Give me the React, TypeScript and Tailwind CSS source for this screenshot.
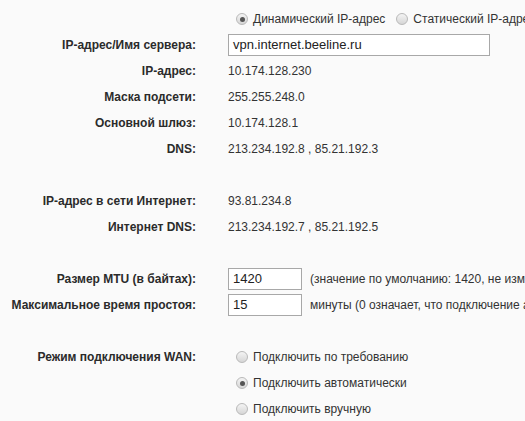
import React from 'react'

// ── Helpers ────────────────────────────────────────────────────────────────

function Radio({ checked }: { checked?: boolean }) {
  return (
    <span className="ml-2 mr-[5px] inline-flex h-3 w-3 shrink-0 items-center justify-center rounded-full border border-[#b9b9b9] bg-gradient-to-b from-[#f4f4f4] to-[#d6d6d6]">
      {checked && <span className="h-[5px] w-[5px] rounded-full bg-[#555]" />}
    </span>
  )
}

function Row({ label, children }: { label?: string; children?: React.ReactNode }) {
  return (
    <div className="flex h-[26px] items-center">
      <div className="w-[196px] shrink-0 text-right font-bold text-[#2b2b2b]">{label}</div>
      <div className="ml-[32px] flex items-center whitespace-nowrap text-[#333]">{children}</div>
    </div>
  )
}

function TextInput({ value, width }: { value: string; width: string }) {
  return (
    <div
      className={`${width} flex h-[22px] items-center border border-[#a8a8a8] bg-white pl-[4px] text-[13px] text-[#222]`}
    >
      {value}
    </div>
  )
}

// ── Page ───────────────────────────────────────────────────────────────────

export default function App() {
  return (
    <div
      className="h-[421px] w-[525px] overflow-hidden bg-[#fafafa] pt-[6px] text-[12px]"
      style={{ fontFamily: '"Liberation Sans", Arial, sans-serif' }}
    >
      <Row>
        <Radio checked />
        <span>Динамический IP-адрес</span>
        <span className="w-[3px]" />
        <Radio />
        <span>Статический IP-адрес</span>
      </Row>
      <Row label="IP-адрес/Имя сервера:">
        <TextInput value="vpn.internet.beeline.ru" width="w-[262px]" />
      </Row>
      <Row label="IP-адрес:">10.174.128.230</Row>
      <Row label="Маска подсети:">255.255.248.0</Row>
      <Row label="Основной шлюз:">10.174.128.1</Row>
      <Row label="DNS:">213.234.192.8 , 85.21.192.3</Row>
      <Row />
      <Row label="IP-адрес в сети Интернет:">93.81.234.8</Row>
      <Row label="Интернет DNS:">213.234.192.7 , 85.21.192.5</Row>
      <Row />
      <Row label="Размер MTU (в байтах):">
        <TextInput value="1420" width="w-[74px]" />
        <span className="ml-[8px]">(значение по умолчанию: 1420, не изменяйте без необходимости)</span>
      </Row>
      <Row label="Максимальное время простоя:">
        <TextInput value="15" width="w-[74px]" />
        <span className="ml-[8px]">минуты (0 означает, что подключение активно всегда)</span>
      </Row>
      <Row />
      <Row label="Режим подключения WAN:">
        <Radio />
        <span>Подключить по требованию</span>
      </Row>
      <Row>
        <Radio checked />
        <span>Подключить автоматически</span>
      </Row>
      <Row>
        <Radio />
        <span>Подключить вручную</span>
      </Row>
    </div>
  )
}
